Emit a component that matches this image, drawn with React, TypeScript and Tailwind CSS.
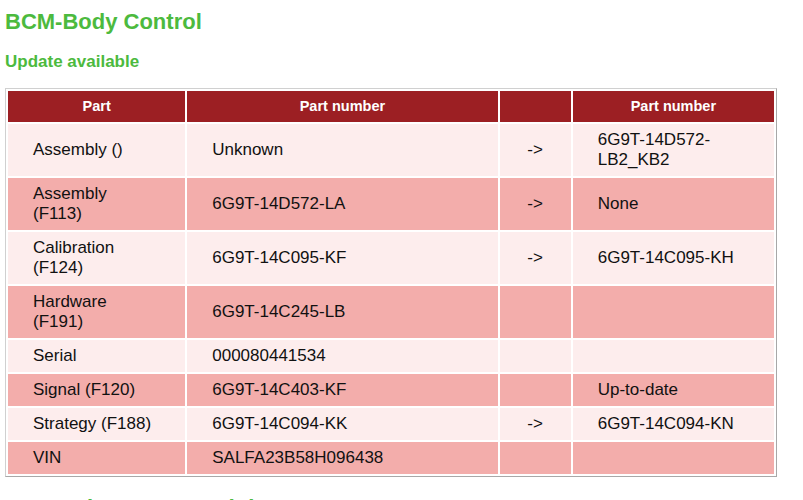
type PartRow = {
  part: string
  current: string
  arrow: boolean
  target: string
}

const ROWS: PartRow[] = [
  { part: 'Assembly ()', current: 'Unknown', arrow: true, target: '6G9T-14D572-LB2_KB2' },
  { part: 'Assembly (F113)', current: '6G9T-14D572-LA', arrow: true, target: 'None' },
  { part: 'Calibration (F124)', current: '6G9T-14C095-KF', arrow: true, target: '6G9T-14C095-KH' },
  { part: 'Hardware (F191)', current: '6G9T-14C245-LB', arrow: false, target: '' },
  { part: 'Serial', current: '000080441534', arrow: false, target: '' },
  { part: 'Signal (F120)', current: '6G9T-14C403-KF', arrow: false, target: 'Up-to-date' },
  { part: 'Strategy (F188)', current: '6G9T-14C094-KK', arrow: true, target: '6G9T-14C094-KN' },
  { part: 'VIN', current: 'SALFA23B58H096438', arrow: false, target: '' },
]

function ModuleTable({ rows }: { rows: PartRow[] }) {
  return (
    <table className="w-[772px] table-fixed border-separate border-spacing-[2px] border border-t-[#d0d0d0] border-l-[#d0d0d0] border-r-[#a8a8a8] border-b-[#a8a8a8] text-[17px] leading-[20px] text-[#111]">
      <thead>
        <tr className="bg-[#9c1f23] text-[14.5px] font-bold leading-[19px] text-white">
          <th className="w-[177px] py-[6px] text-center">Part</th>
          <th className="w-[310px] py-[6px] text-center">Part number</th>
          <th className="w-[71px] py-[6px]"></th>
          <th className="w-[201px] py-[6px] text-center">Part number</th>
        </tr>
      </thead>
      <tbody>
        {rows.map((row, idx) => (
          <tr
            key={row.part}
            className={idx % 2 === 0 ? 'bg-[#fdeded]' : 'bg-[#f3adab]'}
          >
            <td className="py-[6px] pl-[25px] pr-[28px]">{row.part}</td>
            <td className="py-[6px] pl-[25px] pr-[25px]">{row.current}</td>
            <td className="py-[6px] text-center">{row.arrow ? '->' : ''}</td>
            <td className="py-[6px] pl-[25px] pr-[25px]">{row.target}</td>
          </tr>
        ))}
      </tbody>
    </table>
  )
}

export default function App() {
  return (
    <div className="min-h-[500px] bg-white pl-[5px] pt-[9px] font-['Liberation_Sans',Arial,sans-serif]">
      <h2 className="text-[22px] font-bold leading-[26px] text-[#4cba3e]">
        BCM-Body Control
      </h2>
      <h3 className="mt-[17px] text-[17px] font-bold leading-[20px] text-[#4cba3e]">
        Update available
      </h3>
      <div className="mt-[16px]">
        <ModuleTable rows={ROWS} />
      </div>
      <h2 className="mt-[18px] text-[22px] font-bold leading-[26px] text-[#4cba3e]">
        DDM-Driver Door Module
      </h2>
    </div>
  )
}
